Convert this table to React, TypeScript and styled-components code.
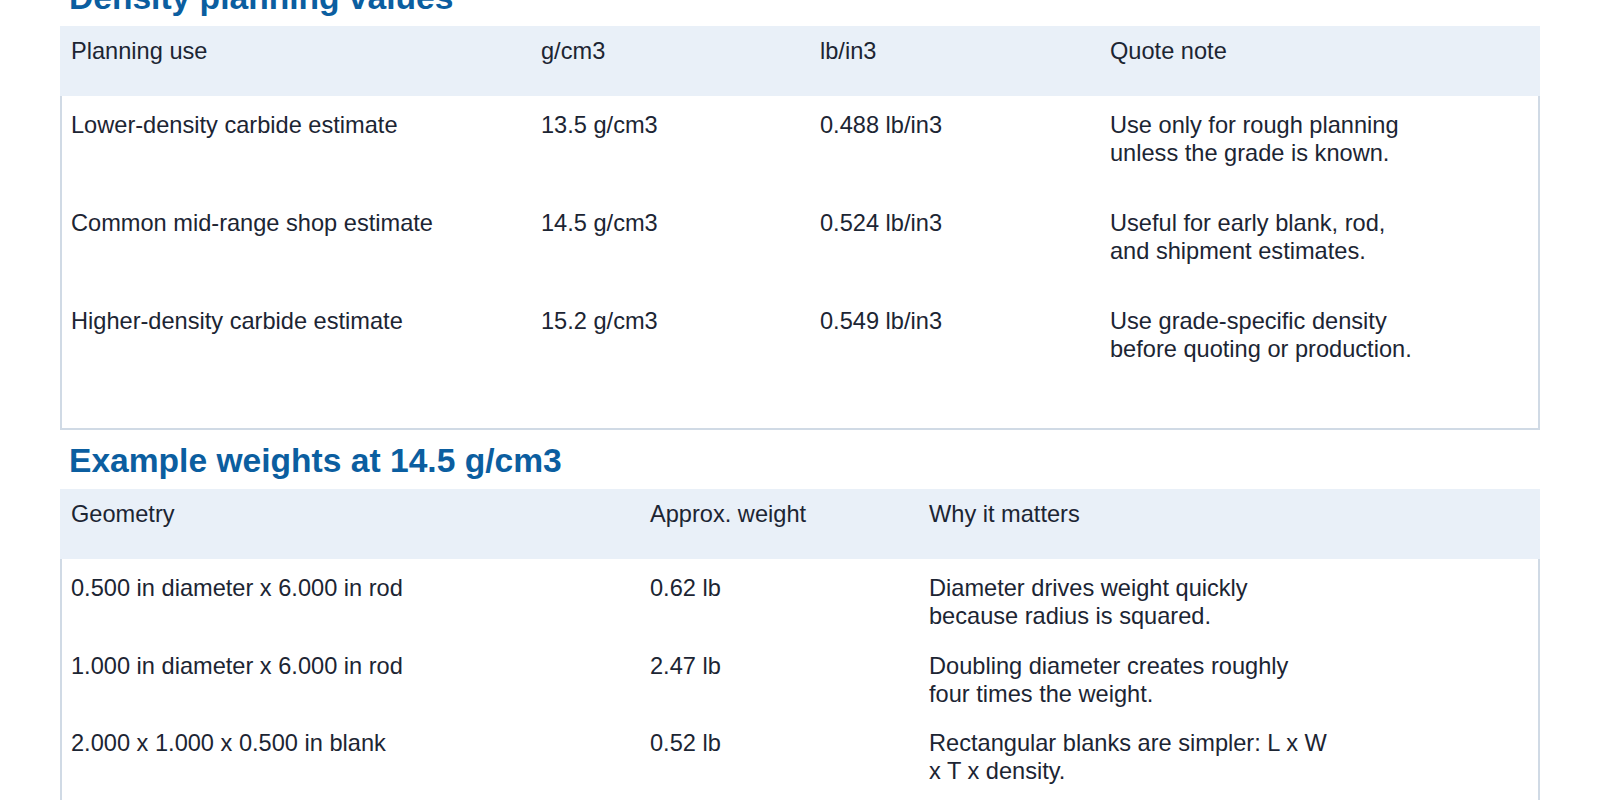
import styled, { createGlobalStyle } from "styled-components";

const GlobalStyle = createGlobalStyle`
  html, body {
    margin: 0;
    padding: 0;
    overflow: hidden;
    background: #ffffff;
  }
  body {
    font-family: "Liberation Sans", Arial, sans-serif;
    color: #1c2533;
  }
`;

const Page = styled.main`
  padding: 0 60px;
  margin-top: -22px;
`;

const Section = styled.section`
  display: flex;
  flex-direction: column;
`;

const Heading = styled.h2<{ $first?: boolean }>`
  margin: ${({ $first }) => ($first ? "0" : "11px")} 0 8px 9px;
  font-size: 33.6px;
  line-height: 40px;
  font-weight: 700;
  color: #0b5ea0;
`;

const TableWrap = styled.div<{ $tail: number }>`
  border: 2px solid #d0dae5;
  border-top: none;
  padding-bottom: ${({ $tail }) => $tail}px;
`;

const HeadRow = styled.div<{ $cols: string }>`
  display: grid;
  grid-template-columns: ${({ $cols }) => $cols};
  margin: 0 -2px;
  background: #e9f0f8;
`;

const HeadCell = styled.div`
  padding: 11px 11px 31px;
  font-size: 23.6px;
  line-height: 28px;
`;

const Row = styled.div<{ $cols: string }>`
  display: grid;
  grid-template-columns: ${({ $cols }) => $cols};
`;

const Cell = styled.div<{ $bottom: number }>`
  padding: 15px 9px ${({ $bottom }) => $bottom}px;
  font-size: 23.6px;
  line-height: 28px;
`;

const CellText = styled.span<{ $max?: number }>`
  display: block;
  max-width: ${({ $max }) => ($max ? `${$max}px` : "none")};
`;

type TableSpec = {
  cols: string;
  head: string[];
  rows: string[][];
  rowBottom: number;
  tail: number;
  noteMax: number;
};

const density: TableSpec = {
  cols: "470px 279px 290px 1fr",
  head: ["Planning use", "g/cm3", "lb/in3", "Quote note"],
  rows: [
    ["Lower-density carbide estimate", "13.5 g/cm3", "0.488 lb/in3", "Use only for rough planning unless the grade is known."],
    ["Common mid-range shop estimate", "14.5 g/cm3", "0.524 lb/in3", "Useful for early blank, rod, and shipment estimates."],
    ["Higher-density carbide estimate", "15.2 g/cm3", "0.549 lb/in3", "Use grade-specific density before quoting or production."],
  ],
  rowBottom: 27,
  tail: 38,
  noteMax: 312,
};

const weights: TableSpec = {
  cols: "579px 279px 1fr",
  head: ["Geometry", "Approx. weight", "Why it matters"],
  rows: [
    ["0.500 in diameter x 6.000 in rod", "0.62 lb", "Diameter drives weight quickly because radius is squared."],
    ["1.000 in diameter x 6.000 in rod", "2.47 lb", "Doubling diameter creates roughly four times the weight."],
    ["2.000 x 1.000 x 0.500 in blank", "0.52 lb", "Rectangular blanks are simpler: L x W x T x density."],
  ],
  rowBottom: 6.5,
  tail: 38,
  noteMax: 401,
};

const DataTable = ({ spec }: { spec: TableSpec }) => (
  <TableWrap $tail={spec.tail}>
    <HeadRow $cols={spec.cols}>
      {spec.head.map((h) => (
        <HeadCell key={h}>{h}</HeadCell>
      ))}
    </HeadRow>
    {spec.rows.map((row) => (
      <Row key={row[0]} $cols={spec.cols}>
        {row.map((value, i) => (
          <Cell key={i} $bottom={spec.rowBottom}>
            <CellText $max={i === row.length - 1 ? spec.noteMax : undefined}>{value}</CellText>
          </Cell>
        ))}
      </Row>
    ))}
  </TableWrap>
);

const App = () => (
  <>
    <GlobalStyle />
    <Page>
      <Section>
        <Heading $first>Density planning values</Heading>
        <DataTable spec={density} />
      </Section>
      <Section>
        <Heading>Example weights at 14.5 g/cm3</Heading>
        <DataTable spec={weights} />
      </Section>
    </Page>
  </>
);

export default App;
